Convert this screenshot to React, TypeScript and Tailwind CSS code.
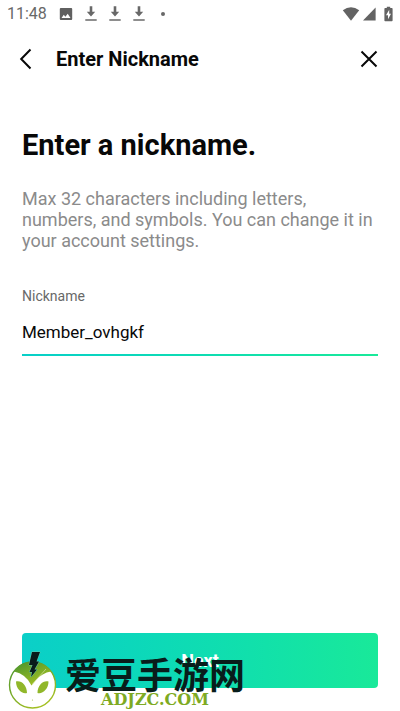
import { useState } from "react";

function DownloadIcon() {
  return (
    <svg width="12" height="16" viewBox="0 0 12 16" aria-hidden="true">
      <path d="M4.7 0.3h2.6v5.5H10.2L6 10.6 1.8 5.8h2.9z" fill="#686868" />
      <path d="M0.3 14h11.4" stroke="#686868" strokeWidth="1.5" />
    </svg>
  );
}

function StatusBar() {
  return (
    <div className="flex h-7 items-center justify-between px-[7px] text-[#686868]">
      <div className="flex items-center">
        <span className="w-[52px] text-base leading-7">11:48</span>
        <svg className="mr-3" width="14" height="14" viewBox="0 0 14 14" aria-hidden="true">
          <path
            fill="#606060"
            fillRule="evenodd"
            d="M1.8 1h10.4q1 0 1 1v10q0 1-1 1H1.8q-1 0-1-1V2q0-1 1-1zM2.5 11h9L8.7 6.7 6.4 9.7 4.8 7.8z"
          />
        </svg>
        <div className="flex gap-3">
          <DownloadIcon />
          <DownloadIcon />
          <DownloadIcon />
        </div>
        <span className="ml-4 size-1 rounded-full bg-[#686868]" />
      </div>
      <div className="flex items-center">
        <svg width="18" height="14" viewBox="0 0 18 14" aria-hidden="true">
          <path d="M0.8 3.3Q9-2.8 17.2 3.3L9 13.7z" fill="#636363" />
        </svg>
        <svg className="mr-2 ml-0.5" width="14" height="14" viewBox="0 0 14 14" aria-hidden="true">
          <path d="M13.6 0.5v13H1z" fill="#636363" />
        </svg>
        <svg width="9" height="16" viewBox="0 0 9 16" aria-hidden="true">
          <path d="M2.8 0.7h3.4V2h1.6q0.8 0 0.8 0.8v11.7q0 0.8-0.8 0.8H1.2q-0.8 0-0.8-0.8V2.8Q0.4 2 1.2 2h1.6z" fill="#636363" />
          <path d="M5.2 3.8 2 9.2h2v4l3-5.5H5.2z" fill="#fff" />
        </svg>
      </div>
    </div>
  );
}

function Watermark() {
  return (
    <div className="pointer-events-none absolute bottom-0 left-2 flex items-end">
      <svg width="49" height="62" viewBox="0 0 49 62" aria-hidden="true">
        <defs>
          <linearGradient id="leaf" x1="0" y1="0" x2="0.6" y2="1">
            <stop offset="0" stopColor="#45922f" />
            <stop offset="1" stopColor="#a3bf22" />
          </linearGradient>
        </defs>
        <circle cx="24.5" cy="36" r="23" fill="#fff" stroke="url(#leaf)" strokeWidth="1.4" />
        <path d="M6 22.5Q13 12.6 24.5 12.6T43 22.5Q34 24 28 31L23.5 36.5Q18 25 6 22.5z" fill="url(#leaf)" />
        <path d="M24.5 35 38 20" stroke="#d5e3a6" strokeWidth="0.7" />
        <path d="M8 32.5C13 31 19 36 19 44C14 45.5 8 40 8 32.5zM40.5 32.5C35.5 31 29.5 36 29.5 44C34.5 45.5 40.5 40 40.5 32.5z" fill="#91b72a" />
        <path
          d="M24 3h8l-3.5 9.5h2.5l-4.5 8h2.5L23 28l1-5h-2.5l3-7H21z"
          fill="#091c1b"
          stroke="#68c9ad"
          strokeWidth="1"
          paintOrder="stroke"
        />
        <circle cx="24.5" cy="51" r="0.6" fill="#a6b94d" />
      </svg>
      <div className="ml-2 flex flex-col items-center">
        <span className="font-['Noto_Sans_CJK_SC',sans-serif] text-[36px] leading-8 font-bold text-[#081d1b]">
          爱豆手游网
        </span>
        <span className="font-['DejaVu_Serif',serif] text-base leading-[22px] font-bold text-[#7eaa22]">ADJZC.COM</span>
      </div>
    </div>
  );
}

export default function App() {
  const [nickname, setNickname] = useState("Member_ovhgkf");

  return (
    <div className="relative flex min-h-screen flex-col bg-white font-['Roboto',sans-serif] text-[#080808]">
      <StatusBar />
      <header className="flex h-[61px] items-center px-[18px]">
        <button type="button" aria-label="Back" className="flex w-[38px] justify-start">
          <svg width="16" height="22" viewBox="0 0 16 22" fill="none" stroke="currentColor" strokeWidth="2" aria-hidden="true">
            <path d="M12.5 1.5 3.2 11l9.3 9.5" />
          </svg>
        </button>
        <h1 className="grow text-xl font-bold">Enter Nickname</h1>
        <button type="button" aria-label="Close">
          <svg className="mr-1" width="18" height="18" viewBox="0 0 18 18" fill="none" stroke="currentColor" strokeWidth="2" aria-hidden="true">
            <path d="m1.5 1.5 15 15m0-15-15 15" />
          </svg>
        </button>
      </header>
      <main className="flex grow flex-col px-[22px] pb-[23px]">
        <h2 className="mt-10 text-[29px] leading-8 font-bold">Enter a nickname.</h2>
        <p className="mt-[27px] text-lg leading-[21px] text-[#8b8b8b]">
          Max 32 characters including letters, numbers, and symbols. You can change it in your account settings.
        </p>
        <label htmlFor="nickname" className="mt-[35px] text-sm leading-5 text-[#686868]">
          Nickname
        </label>
        <input
          id="nickname"
          type="text"
          maxLength={32}
          value={nickname}
          onChange={(event) => setNickname(event.target.value)}
          className="mt-2.5 h-8 w-full bg-transparent text-[17px] outline-none"
        />
        <div className="mt-1.5 h-0.5 bg-linear-to-r from-[#08cfc8] to-[#19e999]" />
        <button
          type="button"
          className="mt-auto h-[55px] rounded bg-linear-to-r from-[#0bcfc8] to-[#19e999] text-lg font-bold text-white"
        >
          Next
        </button>
      </main>
      <Watermark />
    </div>
  );
}
